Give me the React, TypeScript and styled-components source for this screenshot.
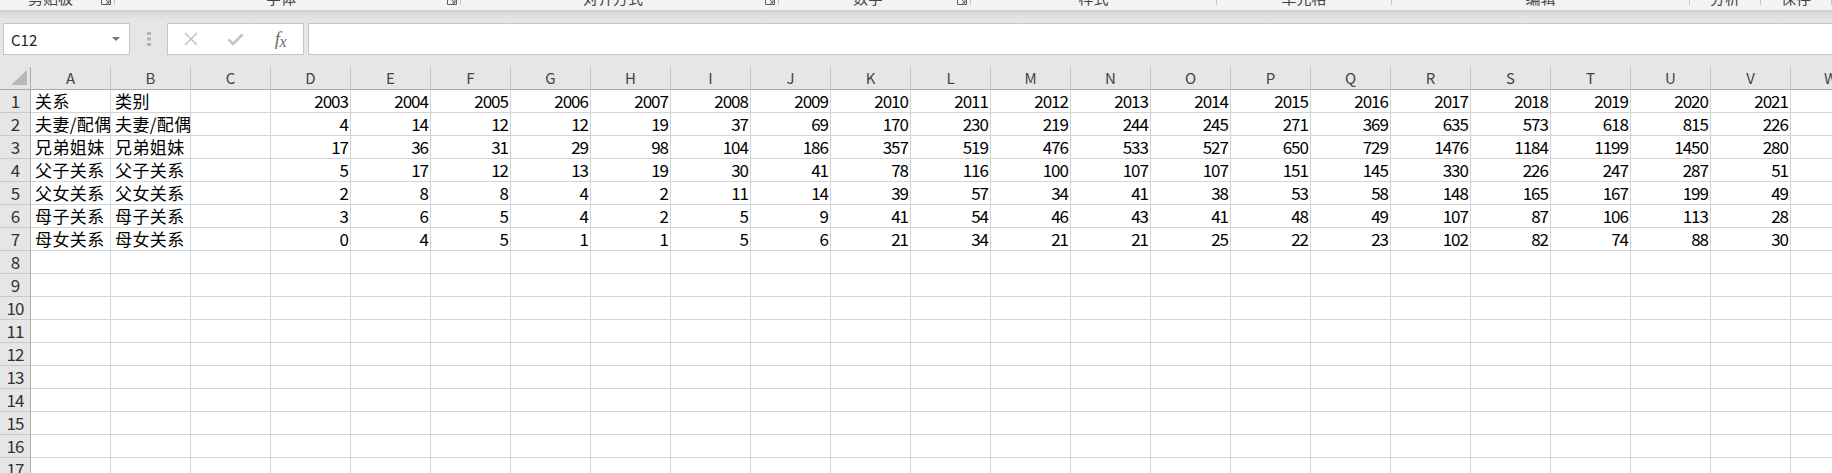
import React from "react";
import styled, { createGlobalStyle } from "styled-components";

type RibbonGroupInfo = {
	label: string;
	width?: number;
	launcher?: boolean;
};

type DataRow = {
	relation: string;
	category: string;
	values: number[];
};

const ribbonGroups: RibbonGroupInfo[] = [
	{ label: "剪贴板", width: 115, launcher: true },
	{ label: "字体", width: 346, launcher: true },
	{ label: "对齐方式", width: 318, launcher: true },
	{ label: "数字", width: 192, launcher: true },
	{ label: "样式", width: 246 },
	{ label: "单元格", width: 175 },
	{ label: "编辑", width: 298 },
	{ label: "分析", width: 71 },
	{ label: "保存" },
];

const columnLetters = "ABCDEFGHIJKLMNOPQRSTUVW".split("");
const years = Array.from({ length: 19 }, (_, i) => 2003 + i);

const dataRows: DataRow[] = [
	{
		relation: "夫妻/配偶",
		category: "夫妻/配偶",
		values: [4, 14, 12, 12, 19, 37, 69, 170, 230, 219, 244, 245, 271, 369, 635, 573, 618, 815, 226],
	},
	{
		relation: "兄弟姐妹",
		category: "兄弟姐妹",
		values: [17, 36, 31, 29, 98, 104, 186, 357, 519, 476, 533, 527, 650, 729, 1476, 1184, 1199, 1450, 280],
	},
	{
		relation: "父子关系",
		category: "父子关系",
		values: [5, 17, 12, 13, 19, 30, 41, 78, 116, 100, 107, 107, 151, 145, 330, 226, 247, 287, 51],
	},
	{
		relation: "父女关系",
		category: "父女关系",
		values: [2, 8, 8, 4, 2, 11, 14, 39, 57, 34, 41, 38, 53, 58, 148, 165, 167, 199, 49],
	},
	{
		relation: "母子关系",
		category: "母子关系",
		values: [3, 6, 5, 4, 2, 5, 9, 41, 54, 46, 43, 41, 48, 49, 107, 87, 106, 113, 28],
	},
	{
		relation: "母女关系",
		category: "母女关系",
		values: [0, 4, 5, 1, 1, 5, 6, 21, 34, 21, 21, 25, 22, 23, 102, 82, 74, 88, 30],
	},
];

const TOTAL_ROWS = 17;

// one array of cell values per sheet row, columns A..W
const buildRows = (): (string | number | null)[][] => {
	const rows: (string | number | null)[][] = [];
	rows.push(["关系", "类别", null, ...years, null]);
	dataRows.forEach((r) => rows.push([r.relation, r.category, null, ...r.values, null]));
	while (rows.length < TOTAL_ROWS) rows.push(columnLetters.map(() => null));
	return rows;
};

const Launcher = () => (
	<LauncherIcon width="10" height="10" viewBox="0 0 10 10">
		<path d="M0.5 4.5V9.5H9.5V0.5" fill="none" stroke="#5f5f5f" strokeWidth="1" />
		<path d="M3 3L8 8M5 8H8V5" fill="none" stroke="#5f5f5f" strokeWidth="1" />
	</LauncherIcon>
);

const App = () => {
	const rows = buildRows();
	return (
		<>
			<GlobalStyle />
			<Page>
				<Ribbon>
					{ribbonGroups.map((g) => (
						<RibbonGroup key={g.label} $width={g.width}>
							<GroupLabel>{g.label}</GroupLabel>
							{g.launcher && <Launcher />}
							<GroupDivider />
						</RibbonGroup>
					))}
				</Ribbon>

				<FormulaBar>
					<NameBox>
						<span>C12</span>
						<Caret />
					</NameBox>
					<Grip>
						<svg width="4" height="14" viewBox="0 0 4 14">
							<rect x="0" y="0" width="4" height="3" fill="#b3b3b3" />
							<rect x="0" y="5.5" width="4" height="3" fill="#b3b3b3" />
							<rect x="0" y="11" width="4" height="3" fill="#b3b3b3" />
						</svg>
					</Grip>
					<EntryButtons>
						<IconSlot>
							<svg width="16" height="16" viewBox="0 0 16 16">
								<path d="M2 2L14 14M14 2L2 14" stroke="#bdbdbd" strokeWidth="1.4" />
							</svg>
						</IconSlot>
						<IconSlot>
							<svg width="17" height="13" viewBox="0 0 17 13">
								<path d="M1.5 6.5L6 11L15.5 1.5" fill="none" stroke="#c4c4c4" strokeWidth="2.6" />
							</svg>
						</IconSlot>
						<IconSlot>
							<Fx>
								<i>f</i>
								<Sub>x</Sub>
							</Fx>
						</IconSlot>
					</EntryButtons>
					<FormulaInput />
				</FormulaBar>

				<Sheet>
					<Corner>
						<svg width="16" height="15" viewBox="0 0 16 15">
							<path d="M16 0V15H0Z" fill="#b8b8b8" />
						</svg>
					</Corner>
					{columnLetters.map((c) => (
						<ColumnHeader key={c}>{c}</ColumnHeader>
					))}
					{rows.map((row, r) => (
						<React.Fragment key={r}>
							<RowHeader>{r + 1}</RowHeader>
							{row.map((v, c) => (
								<Cell key={c} $numeric={typeof v === "number"}>
									{v}
								</Cell>
							))}
						</React.Fragment>
					))}
				</Sheet>
			</Page>
		</>
	);
};

const GlobalStyle = createGlobalStyle`
	html, body {
		margin: 0;
		padding: 0;
		background: #ffffff;
	}
	body {
		font-family: "Noto Sans CJK SC", "Noto Sans", sans-serif;
		color: #000;
	}
`;

const Page = styled.div`
	width: 1832px;
	height: 473px;
	overflow: hidden;
	display: flex;
	flex-direction: column;
	background: #e6e6e6;
`;

const Ribbon = styled.div`
	display: flex;
	height: 10px;
	flex-shrink: 0;
	overflow: hidden;
	background: #f3f3f3;
`;

const RibbonGroup = styled.div<{ $width?: number }>`
	display: flex;
	align-items: flex-start;
	${(p) => (p.$width ? `width: ${p.$width}px; flex-shrink: 0;` : "flex: 1;")}
`;

const GroupLabel = styled.div`
	flex: 1;
	text-align: center;
	font-size: 15px;
	line-height: 20px;
	margin-top: -12px;
	color: #444;
	white-space: nowrap;
`;

const LauncherIcon = styled.svg`
	margin-top: -5px;
	margin-right: 3px;
	flex-shrink: 0;
`;

const GroupDivider = styled.div`
	width: 1px;
	height: 5px;
	background: #c8c8c8;
	flex-shrink: 0;
`;

const FormulaBar = styled.div`
	display: flex;
	align-items: stretch;
	height: 57px;
	box-sizing: border-box;
	padding: 13px 0 12px 3px;
	flex-shrink: 0;
	background: linear-gradient(#d3d3d3 0px, #e2e2e2 7px, #e6e6e6 12px);
`;

const NameBox = styled.div`
	width: 127px;
	box-sizing: border-box;
	border: 1px solid #c6c6c6;
	background: #fff;
	display: flex;
	align-items: center;
	justify-content: space-between;
	padding: 0 9px 0 7px;
	font-size: 15px;
	color: #222;
`;

const Caret = styled.span`
	width: 0;
	height: 0;
	border-left: 4px solid transparent;
	border-right: 4px solid transparent;
	border-top: 4px solid #777;
`;

const Grip = styled.div`
	width: 37px;
	display: flex;
	align-items: center;
	justify-content: center;
`;

const EntryButtons = styled.div`
	width: 137px;
	box-sizing: border-box;
	border: 1px solid #c6c6c6;
	background: #fff;
	display: flex;
`;

const IconSlot = styled.div`
	width: 45px;
	display: flex;
	align-items: center;
	justify-content: center;
`;

const Fx = styled.span`
	font-family: "Liberation Serif", serif;
	font-size: 19px;
	color: #6d6d6d;
	font-style: italic;
	display: flex;
	align-items: baseline;
	letter-spacing: -0.5px;
`;

const Sub = styled.i`
	font-size: 16px;
	position: relative;
	top: 2px;
`;

const FormulaInput = styled.div`
	flex: 1;
	margin-left: 4px;
	margin-right: -2px;
	border: 1px solid #c6c6c6;
	background: #fff;
`;

const Sheet = styled.div`
	flex: 1;
	display: grid;
	grid-template-columns: 31px repeat(23, 80px);
	grid-auto-rows: 23px;
	background: #fff;
`;

const HeaderBase = styled.div`
	box-sizing: border-box;
	background: #e6e6e6;
	line-height: 22px;
	text-align: center;
	overflow: hidden;
`;

const Corner = styled(HeaderBase)`
	border-right: 1px solid #ababab;
	border-bottom: 1px solid #ababab;
	display: flex;
	align-items: flex-end;
	justify-content: flex-end;
	padding: 0 3px 4px 0;
`;

const ColumnHeader = styled(HeaderBase)`
	border-right: 1px solid #c4c4c4;
	border-bottom: 1px solid #ababab;
	font-size: 15px;
	color: #444;
`;

const RowHeader = styled(HeaderBase)`
	border-right: 1px solid #ababab;
	border-bottom: 1px solid #c8c8c8;
	font-size: 17px;
	letter-spacing: -1px;
	color: #333;
`;

const Cell = styled.div<{ $numeric: boolean }>`
	box-sizing: border-box;
	border-right: 1px solid #d4d4d4;
	border-bottom: 1px solid #d4d4d4;
	font-size: 17px;
	line-height: 22px;
	white-space: nowrap;
	overflow: hidden;
	padding: ${(p) => (p.$numeric ? "0 2px 0 0" : "0 0 0 4px")};
	text-align: ${(p) => (p.$numeric ? "right" : "left")};
	letter-spacing: ${(p) => (p.$numeric ? "-1px" : "0.4px")};
`;

export default App;
